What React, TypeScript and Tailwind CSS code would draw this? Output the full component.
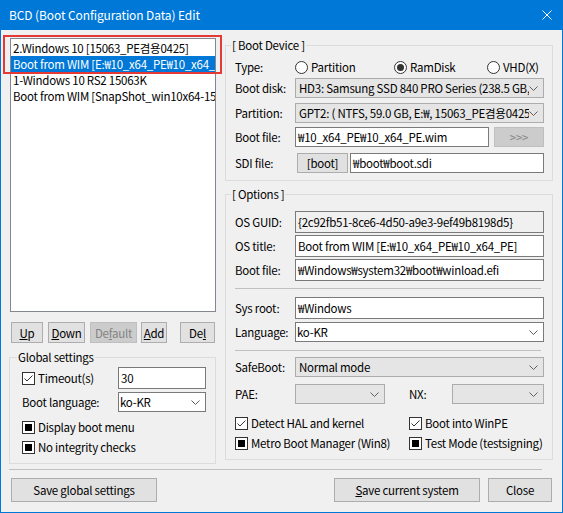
import React from 'react';

const Chevron = () => (
    <svg width="9" height="5" viewBox="0 0 9 5" className="shrink-0">
        <path d="M0.5 0.5 L4.5 4.5 L8.5 0.5" fill="none" stroke="#606060" strokeWidth="1" />
    </svg>
);

function Combo({ text, className = '', white = false }: { text?: string; className?: string; white?: boolean }) {
    return (
        <div
            className={`flex items-center h-[20px] border pr-[5px] ${white ? 'bg-white border-[#7a7a7a] pl-[1px]' : 'bg-[#e5e5e5] border-[#acacac] pl-[3px]'} ${className}`}
        >
            <span className="flex-1 min-w-0 overflow-hidden whitespace-nowrap">{text}</span>
            <Chevron />
        </div>
    );
}

function Edit({ text, className = '', ro = false }: { text: string; className?: string; ro?: boolean }) {
    return (
        <div
            className={`flex items-center border border-[#7a7a7a] px-[2px] whitespace-nowrap overflow-hidden ${ro ? 'bg-[#f0f0f0]' : 'bg-white'} ${className}`}
        >
            {text}
        </div>
    );
}

function Btn({ children, className = '', disabled = false }: { children: React.ReactNode; className?: string; disabled?: boolean }) {
    return (
        <button
            type="button"
            className={`flex items-center justify-center border shrink-0 ${disabled ? 'bg-[#cccccc] border-[#bfbfbf] text-[#838383]' : 'bg-[#e1e1e1] border-[#adadad]'} ${className}`}
        >
            {children}
        </button>
    );
}

function Check({ mixed = false }: { mixed?: boolean }) {
    return (
        <span className="w-[13px] h-[13px] border border-[#333333] bg-white flex items-center justify-center shrink-0">
            {mixed ? (
                <span className="w-[7px] h-[7px] bg-black" />
            ) : (
                <svg width="11" height="11" viewBox="0 0 11 11">
                    <path d="M1.5 5.5 L4 8 L9.5 2.5" fill="none" stroke="#333333" strokeWidth="1" />
                </svg>
            )}
        </span>
    );
}

function Radio({ on = false, label }: { on?: boolean; label: string }) {
    return (
        <span className="flex items-center gap-[3px]">
            <span className="w-[13px] h-[13px] rounded-full border border-[#333333] bg-white flex items-center justify-center shrink-0">
                {on && <span className="w-[7px] h-[7px] rounded-full bg-[#333333]" />}
            </span>
            {label}
        </span>
    );
}

function Row({ label, className = '', children }: { label: string; className?: string; children: React.ReactNode }) {
    return (
        <div className={`flex items-center ${className}`}>
            <span className="w-[60px] shrink-0">{label}</span>
            {children}
        </div>
    );
}

const items = [
    '2.Windows 10 [15063_PE겸용0425]',
    'Boot from WIM [E:₩10_x64_PE₩10_x64_PE]',
    '1-Windows 10 RS2 15063K',
    'Boot from WIM [SnapShot_win10x64-15063K.wim]',
];

export default function App() {
    return (
        <div className="relative w-[563px] h-[513px] bg-[#f0f0f0] border-x border-b border-[#0078d7] flex flex-col whitespace-nowrap text-[11.5px] tracking-[-0.25px] leading-[16px] text-black font-['Noto_Sans_CJK_KR',sans-serif]">
            {/* Title bar */}
            <div className="h-[30px] shrink-0 bg-[#0078d7] text-white text-[12px] tracking-[-0.1px] flex items-center justify-between pl-[8px] pr-[10px]">
                <span>BCD (Boot Configuration Data) Edit</span>
                <svg width="10" height="10" viewBox="0 0 10 10">
                    <path d="M0.5 0.5 L9.5 9.5 M9.5 0.5 L0.5 9.5" stroke="white" strokeWidth="1" />
                </svg>
            </div>

            {/* Body */}
            <div className="flex h-[436px] shrink-0 pl-[8px] gap-[8px]">
                {/* Left column */}
                <div className="w-[208px] flex flex-col">
                    <div className="mt-[8px] ml-[1px] w-[206px] h-[274px] border border-[#828790] bg-white pt-[1px] overflow-hidden">
                        {items.map((t, i) => (
                            <div
                                key={i}
                                className={`h-[16px] pl-[2px] overflow-hidden ${i === 1 ? 'bg-[#0078d7] text-white' : ''}`}
                            >
                                {t}
                            </div>
                        ))}
                    </div>

                    <div className="flex mt-[10px] h-[21px]">
                        <Btn className="ml-[2px] w-[32px]"><span><span className="underline">U</span>p</span></Btn>
                        <Btn className="ml-[5px] w-[37px]"><span><span className="underline">D</span>own</span></Btn>
                        <Btn className="ml-[5px] w-[47px]" disabled><span>De<span className="underline">f</span>ault</span></Btn>
                        <Btn className="ml-[4px] w-[26px]"><span><span className="underline">A</span>dd</span></Btn>
                        <Btn className="ml-[13px] w-[35px]"><span>De<span className="underline">l</span></span></Btn>
                    </div>

                    <fieldset className="mt-[6px] w-[207px] min-w-0 border border-[#dcdcdc] p-0 m-0">
                        <legend className="ml-[7px] px-[1px]">Global settings</legend>
                        <div className="pl-[12px] pr-[9px] pb-[8px]">
                            <div className="flex items-center mt-[2px] h-[22px]">
                                <Check />
                                <span className="ml-[3px]">Timeout(s)</span>
                                <Edit text="30" className="ml-auto w-[88px] h-[22px]" />
                            </div>
                            <div className="flex items-center mt-[3px] h-[20px]">
                                <span>Boot language:</span>
                                <Combo white text="ko-KR" className="ml-auto w-[88px]" />
                            </div>
                            <div className="flex items-center mt-[7px] h-[16px]">
                                <Check mixed />
                                <span className="ml-[3px]">Display boot menu</span>
                            </div>
                            <div className="flex items-center mt-[4px] h-[16px]">
                                <Check mixed />
                                <span className="ml-[3px]">No integrity checks</span>
                            </div>
                        </div>
                    </fieldset>
                </div>

                {/* Right column */}
                <div className="w-[328px] min-w-0 flex flex-col">
                    <fieldset className="mt-[7px] min-w-0 border border-[#dcdcdc] p-0 m-0">
                        <legend className="ml-[5px] px-[1px]">[ Boot Device ]</legend>
                        <div className="pl-[9px] pr-[8px] pb-[7px]">
                            <Row label="Type:" className="mt-[4px] h-[20px]">
                                <span className="w-[99px]"><Radio label="Partition" /></span>
                                <span className="w-[93px]"><Radio on label="RamDisk" /></span>
                                <Radio label="VHD(X)" />
                            </Row>
                            <Row label="Boot disk:" className="mt-[1px] h-[20px]">
                                <Combo text="HD3: Samsung SSD 840 PRO Series (238.5 GB, 59.0 GB)" className="flex-1 min-w-0" />
                            </Row>
                            <Row label="Partition:" className="mt-[5px] h-[20px]">
                                <Combo text="GPT2: ( NTFS,  59.0 GB, E:₩, 15063_PE겸용0425 )" className="flex-1 min-w-0" />
                            </Row>
                            <Row label="Boot file:" className="mt-[4px] h-[20px]">
                                <Edit text="₩10_x64_PE₩10_x64_PE.wim" className="flex-1 min-w-0 h-[20px]" />
                                <Btn disabled className="ml-[5px] w-[50px] h-[20px]">&gt;&gt;&gt;</Btn>
                            </Row>
                            <Row label="SDI file:" className="mt-[6px] h-[20px]">
                                <Btn className="ml-[2px] w-[51px] h-[20px]">[boot]</Btn>
                                <Edit text="₩boot₩boot.sdi" className="ml-[2px] flex-1 min-w-0 h-[20px]" />
                            </Row>
                        </div>
                    </fieldset>

                    <fieldset className="mt-[5px] min-w-0 border border-[#dcdcdc] p-0 m-0">
                        <legend className="ml-[5px] px-[1px]">[ Options ]</legend>
                        <div className="pl-[9px] pr-[8px] pb-[8px]">
                            <Row label="OS GUID:" className="mt-[9px] h-[22px]">
                                <Edit ro text="{2c92fb51-8ce6-4d50-a9e3-9ef49b8198d5}" className="flex-1 min-w-0 h-[22px]" />
                            </Row>
                            <Row label="OS title:" className="mt-[2px] h-[22px]">
                                <Edit text="Boot from WIM [E:₩10_x64_PE₩10_x64_PE]" className="flex-1 min-w-0 h-[22px]" />
                            </Row>
                            <Row label="Boot file:" className="mt-[2px] h-[22px]">
                                <Edit text="₩Windows₩system32₩boot₩winload.efi" className="flex-1 min-w-0 h-[22px]" />
                            </Row>
                            <div className="mt-[7px] mr-[3px] h-px bg-[#c0c0c0]" />
                            <Row label="Sys root:" className="mt-[8px] h-[22px]">
                                <Edit text="₩Windows" className="flex-1 min-w-0 h-[22px]" />
                            </Row>
                            <Row label="Language:" className="mt-[3px] h-[20px]">
                                <Combo white text="ko-KR" className="flex-1 min-w-0" />
                            </Row>
                            <div className="mt-[8px] mr-[3px] h-px bg-[#c0c0c0]" />
                            <Row label="SafeBoot:" className="mt-[6px] h-[20px]">
                                <Combo text="Normal mode" className="flex-1 min-w-0" />
                            </Row>
                            <Row label="PAE:" className="mt-[7px] h-[20px]">
                                <Combo className="w-[90px]" />
                                <span className="ml-[24px] w-[43px]">NX:</span>
                                <Combo className="flex-1 min-w-0" />
                            </Row>
                            <div className="flex items-center mt-[11px] h-[16px]">
                                <span className="w-[174px] flex items-center gap-[3px]"><Check />Detect HAL and kernel</span>
                                <span className="flex items-center gap-[3px]"><Check />Boot into WinPE</span>
                            </div>
                            <div className="flex items-center mt-[4px] h-[16px]">
                                <span className="w-[174px] flex items-center gap-[3px]"><Check mixed />Metro Boot Manager (Win8)</span>
                                <span className="flex items-center gap-[3px]"><Check mixed />Test Mode (testsigning)</span>
                            </div>
                        </div>
                    </fieldset>
                </div>
            </div>

            {/* Separator */}
            <div className="mt-[3px] ml-[8px] w-[533px] h-px bg-[#c0c0c0]" />

            {/* Bottom buttons */}
            <div className="flex mt-[8px] h-[24px] pl-[10px] pr-[10px]">
                <Btn className="w-[146px]"><span>Save <span className="underline">g</span>lobal settings</span></Btn>
                <Btn className="ml-auto w-[146px]"><span><span className="underline">S</span>ave current system</span></Btn>
                <Btn className="ml-[8px] w-[64px]">Close</Btn>
            </div>

            {/* Red highlight annotation */}
            <div className="absolute left-[2px] top-[35px] w-[219px] h-[39px] border-2 border-[#e53935] pointer-events-none" />
        </div>
    );
}
